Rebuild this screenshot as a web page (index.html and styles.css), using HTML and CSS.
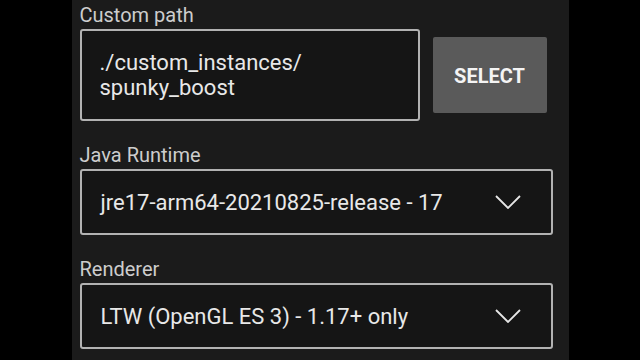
FILE: index.html
```html
<!DOCTYPE html>
<html>
<head>
<meta charset="utf-8">
<link rel="stylesheet" href="styles.css">
</head>
<body>
<div class="panel">
  <div class="label">Custom path</div>
  <div class="path-row">
    <div class="field path-field">./custom_instances/<br>spunky_boost</div>
    <div class="btn">SELECT</div>
  </div>
  <div class="label gap">Java Runtime</div>
  <div class="field select">
    <span class="value">jre17-arm64-20210825-release - 17</span>
    <svg class="chev" width="26" height="14" viewBox="0 0 26 14"><polyline points="1,1 13,13 25,1" fill="none" stroke="#e6e6e6" stroke-width="1.8"/></svg>
  </div>
  <div class="label gap">Renderer</div>
  <div class="field select">
    <span class="value">LTW (OpenGL ES 3) - 1.17+ only</span>
    <svg class="chev" width="26" height="14" viewBox="0 0 26 14"><polyline points="1,1 13,13 25,1" fill="none" stroke="#e6e6e6" stroke-width="1.8"/></svg>
  </div>
</div>
</body>
</html>
```
FILE: styles.css
```css
html, body {
  margin: 0;
  padding: 0;
  background: #000;
  height: 100%;
  overflow: hidden;
}
body {
  font-family: Roboto, "Liberation Sans", sans-serif;
}
.panel {
  width: 497px;
  height: 360px;
  margin: 0 auto;
  background: #1b1b1b;
  box-sizing: border-box;
  padding: 3px 16px 0 8px;
  display: flex;
  flex-direction: column;
}
.label {
  font-size: 20px;
  line-height: 24px;
  color: #cdcdcd;
  margin-bottom: 2px;
}
.label.gap {
  margin-top: 22px;
}
.path-row {
  display: flex;
  align-items: center;
  gap: 13px;
  padding-right: 6px;
}
.field {
  border: 2px solid #b2b2b2;
  border-radius: 3px;
  background: #151515;
  color: #e8e8e8;
  font-size: 22px;
  line-height: 25px;
}
.path-field {
  flex: 1;
  padding: 19px 18px;
}
.btn {
  width: 114px;
  height: 76px;
  background: #5a5a5a;
  border-radius: 2px;
  color: #f4f4f4;
  font-size: 20px;
  font-weight: 700;
  display: flex;
  align-items: center;
  justify-content: center;
  padding-top: 2px;
  box-sizing: border-box;
}
.select {
  height: 66px;
  box-sizing: border-box;
  display: flex;
  align-items: center;
  justify-content: space-between;
  padding: 0 30px 0 19px;
}
.chev {
  display: block;
}
```
